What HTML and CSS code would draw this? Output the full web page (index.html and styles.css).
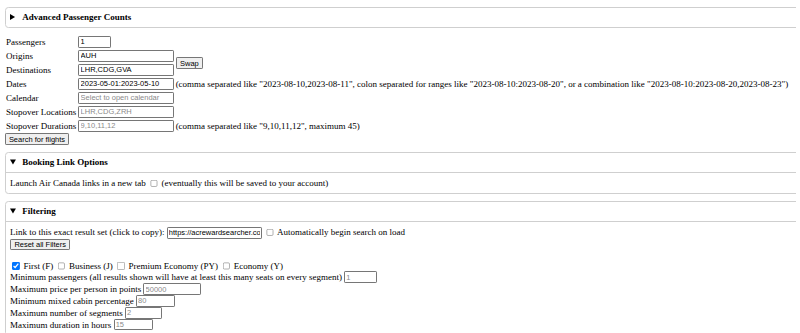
FILE: index.html
```html
<!DOCTYPE html>
<html lang="en">
<head>
<meta charset="utf-8">
<title>Search</title>
<link rel="stylesheet" href="styles.css">
</head>
<body>
<details class="panel panel-first">
  <summary class="panel-title">Advanced Passenger Counts</summary>
</details>

<form class="search-form">
  <table class="search-table">
    <tr>
      <td>Passengers</td>
      <td><input class="field field-small" type="text" value="1"></td>
      <td></td>
    </tr>
    <tr>
      <td>Origins</td>
      <td><input class="field" type="text" value="AUH"></td>
      <td rowspan="2"><button class="btn" type="button">Swap</button></td>
    </tr>
    <tr>
      <td>Destinations</td>
      <td><input class="field" type="text" value="LHR,CDG,GVA"></td>
    </tr>
    <tr>
      <td>Dates</td>
      <td><input class="field" type="text" value="2023-05-01:2023-05-10"></td>
      <td class="hint">(comma separated like "2023-08-10,2023-08-11", colon separated for ranges like "2023-08-10:2023-08-20", or a combination like "2023-08-10:2023-08-20,2023-08-23")</td>
    </tr>
    <tr>
      <td>Calendar</td>
      <td><input class="field" type="text" placeholder="Select to open calendar"></td>
      <td></td>
    </tr>
    <tr>
      <td>Stopover Locations</td>
      <td><input class="field" type="text" placeholder="LHR,CDG,ZRH"></td>
      <td></td>
    </tr>
    <tr>
      <td>Stopover Durations</td>
      <td><input class="field" type="text" placeholder="9,10,11,12"></td>
      <td class="hint">(comma separated like "9,10,11,12", maximum 45)</td>
    </tr>
  </table>
  <button class="btn" type="button">Search for flights</button>
</form>

<details class="panel" open>
  <summary class="panel-title">Booking Link Options</summary>
  <div class="panel-body">
    Launch Air Canada links in a new tab <input class="check" type="checkbox"> (eventually this will be saved to your account)
  </div>
</details>

<details class="panel" open>
  <summary class="panel-title">Filtering</summary>
  <div class="panel-body">
    <div class="line">Link to this exact result set (click to copy): <input class="field" type="text" value="https://acrewardsearcher.com/?origins=AUH" readonly> <input class="check" type="checkbox"> Automatically begin search on load</div>
    <div class="line"><button class="btn" type="button">Reset all Filters</button></div>
    <div class="blank"></div>
    <div class="line"><input class="check" type="checkbox" checked> First (F) <input class="check" type="checkbox"> Business (J) <input class="check" type="checkbox"> Premium Economy (PY) <input class="check" type="checkbox"> Economy (Y)</div>
    <div class="frow">Minimum passengers (all results shown will have at least this many seats on every segment) <input class="field w-58" type="text" placeholder="1"></div>
    <div class="frow">Maximum price per person in points <input class="field w-103" type="text" placeholder="50000"></div>
    <div class="frow">Minimum mixed cabin percentage <input class="field w-70" type="text" placeholder="80"></div>
    <div class="frow">Maximum number of segments <input class="field w-66" type="text" placeholder="2"></div>
    <div class="frow">Maximum duration in hours <input class="field w-70" type="text" placeholder="15"></div>
  </div>
</details>
</body>
</html>
```
FILE: styles.css
```css
html {
  zoom: 0.5625;
  overflow: hidden;
}

body {
  margin: 8px;
  font-family: "Liberation Serif", "Times New Roman", serif;
  font-size: 16px;
  color: #000;
  background: #fff;
}

.panel {
  width: 1560px;
  margin: 12px 0;
  border: 1px solid #cfcfcf;
  border-radius: 6px;
}

.panel-first {
  margin-top: 4px;
}

.panel-title {
  padding: 8px 8px;
  font-weight: bold;
  cursor: pointer;
}

.panel[open] > .panel-title {
  border-bottom: 1px solid #cfcfcf;
}

.panel-body {
  padding: 9px 8px 8px;
}

.search-form {
  margin: 0;
}

.search-table {
  border-spacing: 2px;
}

.search-table td {
  padding: 1px;
  white-space: nowrap;
}

.field {
  font-family: "Liberation Sans", Arial, sans-serif;
  font-size: 13.333px;
  width: 169px;
  height: 21px;
  box-sizing: border-box;
  padding: 1px 2px;
  border: 1px solid #767676;
  border-radius: 2px;
  color: #000;
  background: #fff;
}

.field::placeholder {
  color: #8a8a8a;
}

.field-small { width: 57px; }
.w-58 { width: 58px; }
.w-103 { width: 103px; }
.w-70 { width: 70px; }
.w-66 { width: 66px; }

.btn {
  font-family: "Liberation Sans", Arial, sans-serif;
  font-size: 13.333px;
  height: 21px;
  padding: 1px 6px;
  border: 1px solid #767676;
  border-radius: 2px;
  background: #efefef;
  color: #000;
}

.check {
  width: 13px;
  height: 13px;
  margin: 3px 3px 3px 4px;
  vertical-align: -2px;
}

.line {
  white-space: nowrap;
}

.blank {
  height: 18px;
}

.frow {
  display: flex;
  align-items: center;
  gap: 4px;
  height: 21px;
  white-space: nowrap;
}
```
